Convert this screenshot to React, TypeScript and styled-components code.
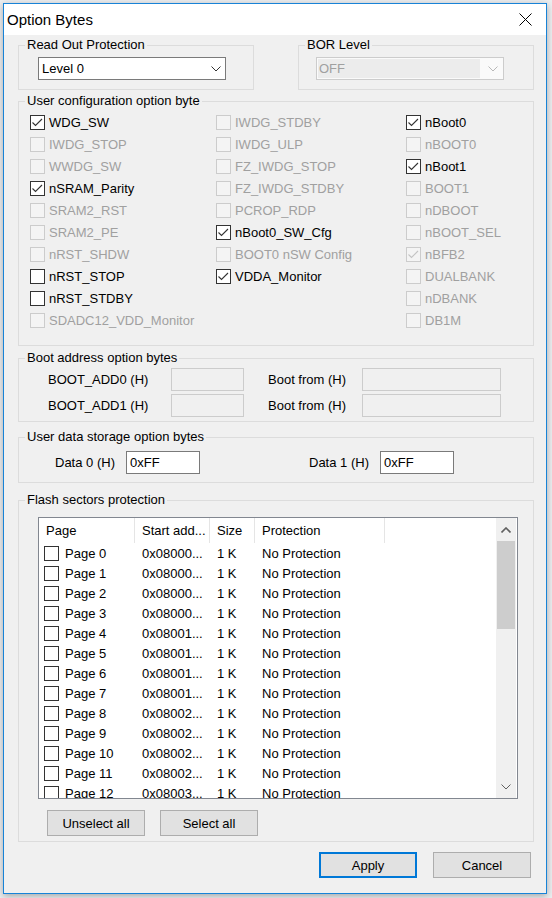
import React from 'react';
import styled, { createGlobalStyle } from 'styled-components';

const GlobalStyle = createGlobalStyle`
  html, body {
    margin: 0;
    padding: 0;
    background: #eceef0;
  }
  body {
    font-family: "Liberation Sans", Arial, sans-serif;
    font-size: 13px;
    color: #000;
  }
  * {
    box-sizing: border-box;
  }
`;

const Page = styled.div`
  width: 552px;
  height: 898px;
  padding: 3px 0 0 3px;
  overflow: hidden;
`;

const Window = styled.div`
  width: 544px;
  height: 891px;
  border: 1px solid #1883d7;
  background: #f0f0f0;
  display: flex;
  flex-direction: column;
  box-shadow: 0 2px 7px rgba(0, 0, 0, 0.3);
`;

const TitleBar = styled.div`
  height: 31px;
  flex: none;
  background: #fff;
  display: flex;
  align-items: center;
  justify-content: space-between;
  padding: 0 14px 0 3px;
  font-size: 15px;
`;

const Body = styled.div`
  padding: 0 12px 0 14px;
  display: flex;
  flex-direction: column;
`;

const TopRow = styled.div`
  display: flex;
  justify-content: space-between;
  margin-top: 10px;
`;

const Group = styled.section<{ $top?: number; $width?: number }>`
  position: relative;
  border: 1px solid #dcdcdc;
  margin-top: ${p => p.$top ?? 0}px;
  width: ${p => (p.$width ? `${p.$width}px` : 'auto')};
`;

const Legend = styled.span`
  position: absolute;
  top: -9px;
  left: 6px;
  padding: 0 2px;
  line-height: 16px;
  background: #f0f0f0;
  white-space: nowrap;
`;

const ComboSlot = styled.div<{ $left: number }>`
  padding: 11px 0 9px ${p => p.$left}px;
`;

const Combo = styled.div<{ $disabled?: boolean }>`
  width: 188px;
  height: 23px;
  border: 1px solid ${p => (p.$disabled ? '#cccccc' : '#7a7a7a')};
  background: ${p => (p.$disabled ? '#fafafa' : '#fff')};
  display: flex;
  align-items: center;
  padding: ${p => (p.$disabled ? '1px 5px 1px 1px' : '0 4px 0 2px')};
  color: ${p => (p.$disabled ? '#a0a0a0' : '#000')};
`;

const ComboText = styled.div<{ $disabled?: boolean }>`
  flex: 1;
  height: 100%;
  display: flex;
  align-items: center;
  padding-left: 1px;
  margin-right: 8px;
  background: ${p => (p.$disabled ? '#ececec' : 'transparent')};
`;

const ConfigGrid = styled.div`
  display: flex;
  padding: 9px 0 14px 11px;
`;

const Column = styled.div<{ $width?: number }>`
  display: flex;
  flex-direction: column;
  width: ${p => (p.$width ? `${p.$width}px` : 'auto')};
`;

const CheckRow = styled.div<{ $disabled?: boolean }>`
  height: 22px;
  display: flex;
  align-items: center;
  gap: 4px;
  color: ${p => (p.$disabled ? '#a0a0a0' : '#000')};
  white-space: nowrap;
`;

const Box = styled.span<{ $disabled?: boolean }>`
  width: 15px;
  height: 15px;
  flex: none;
  border: 1px solid ${p => (p.$disabled ? '#cccccc' : '#333')};
  background: ${p => (p.$disabled ? '#f4f4f4' : '#fff')};
  display: flex;
  align-items: center;
  justify-content: center;
`;

const FieldGrid = styled.div<{ $cols: string; $pad: string }>`
  display: grid;
  grid-template-columns: ${p => p.$cols};
  grid-auto-rows: 23px;
  row-gap: 3px;
  align-items: center;
  padding: ${p => p.$pad};
`;

const FieldLabel = styled.span`
  white-space: nowrap;
`;

const TextBox = styled.div<{ $width: number; $disabled?: boolean }>`
  width: ${p => p.$width}px;
  height: 23px;
  border: 1px solid ${p => (p.$disabled ? '#cccccc' : '#7a7a7a')};
  background: ${p => (p.$disabled ? '#f0f0f0' : '#fff')};
  padding-left: 3px;
  display: flex;
  align-items: center;
`;

const FlashBody = styled.div`
  padding: 16px 15px 5px 19px;
`;

const ListBox = styled.div`
  height: 282px;
  border: 1px solid #828790;
  background: #fff;
  display: flex;
  overflow: hidden;
`;

const TableArea = styled.div`
  flex: 1;
  overflow: hidden;
`;

const TableRow = styled.div<{ $header?: boolean }>`
  display: grid;
  grid-template-columns: 96px 75px 45px 130px;
  height: ${p => (p.$header ? 25 : 20)}px;
  flex: none;
`;

const HeadCell = styled.div`
  border-right: 1px solid #e5e5e5;
  padding-left: 7px;
  display: flex;
  align-items: center;
  white-space: nowrap;
`;

const Cell = styled.div<{ $first?: boolean }>`
  padding-left: ${p => (p.$first ? 5 : 7)}px;
  display: flex;
  align-items: center;
  gap: 6px;
  white-space: nowrap;
`;

const ScrollBar = styled.div`
  width: 20px;
  margin-right: 1px;
  background: #f0f0f0;
  display: flex;
  flex-direction: column;
`;

const ScrollButton = styled.div`
  height: 23px;
  display: flex;
  align-items: center;
  justify-content: center;
`;

const Thumb = styled.div`
  height: 88px;
  margin: 0 1px;
  background: #cdcdcd;
`;

const Spacer = styled.div`
  flex: 1;
`;

const ButtonRow = styled.div<{ $top: number; $end?: boolean }>`
  display: flex;
  gap: ${p => (p.$end ? 16 : 15)}px;
  margin-top: ${p => p.$top}px;
  justify-content: ${p => (p.$end ? 'flex-end' : 'flex-start')};
  padding: ${p => (p.$end ? '0 3px 0 0' : '0 0 0 9px')};
`;

const Button = styled.button<{ $primary?: boolean }>`
  width: 98px;
  height: 26px;
  margin: 0;
  padding: 0;
  font-family: inherit;
  font-size: 13px;
  color: #000;
  background: #e1e1e1;
  border: ${p => (p.$primary ? '2px solid #0078d7' : '1px solid #adadad')};
`;

const Check = ({ color }: { color: string }) => (
  <svg width="13" height="13" viewBox="0 0 13 13">
    <polyline points="1.5,6.5 4.5,9.5 11,3" fill="none" stroke={color} strokeWidth="1.1" />
  </svg>
);

const Chevron = ({ dir, color }: { dir: 'up' | 'down'; color: string }) => (
  <svg width="10" height="6" viewBox="0 0 10 6">
    <polyline
      points={dir === 'down' ? '0.5,0.5 5,5 9.5,0.5' : '0.5,5.5 5,1 9.5,5.5'}
      fill="none"
      stroke={color}
      strokeWidth={dir === 'down' ? 1 : 1.6}
    />
  </svg>
);

type Opt = { label: string; checked?: boolean; disabled?: boolean };

const CheckItem = ({ label, checked, disabled }: Opt) => (
  <CheckRow $disabled={disabled}>
    <Box $disabled={disabled}>{checked && <Check color={disabled ? '#c4c4c4' : '#333'} />}</Box>
    {label}
  </CheckRow>
);

const col1: Opt[] = [
  { label: 'WDG_SW', checked: true },
  { label: 'IWDG_STOP', disabled: true },
  { label: 'WWDG_SW', disabled: true },
  { label: 'nSRAM_Parity', checked: true },
  { label: 'SRAM2_RST', disabled: true },
  { label: 'SRAM2_PE', disabled: true },
  { label: 'nRST_SHDW', disabled: true },
  { label: 'nRST_STOP' },
  { label: 'nRST_STDBY' },
  { label: 'SDADC12_VDD_Monitor', disabled: true },
];

const col2: Opt[] = [
  { label: 'IWDG_STDBY', disabled: true },
  { label: 'IWDG_ULP', disabled: true },
  { label: 'FZ_IWDG_STOP', disabled: true },
  { label: 'FZ_IWDG_STDBY', disabled: true },
  { label: 'PCROP_RDP', disabled: true },
  { label: 'nBoot0_SW_Cfg', checked: true },
  { label: 'BOOT0 nSW Config', disabled: true },
  { label: 'VDDA_Monitor', checked: true },
];

const col3: Opt[] = [
  { label: 'nBoot0', checked: true },
  { label: 'nBOOT0', disabled: true },
  { label: 'nBoot1', checked: true },
  { label: 'BOOT1', disabled: true },
  { label: 'nDBOOT', disabled: true },
  { label: 'nBOOT_SEL', disabled: true },
  { label: 'nBFB2', checked: true, disabled: true },
  { label: 'DUALBANK', disabled: true },
  { label: 'nDBANK', disabled: true },
  { label: 'DB1M', disabled: true },
];

// only the rows that show in the list (the last one is cut by the list edge)
const pages = Array.from({ length: 13 }, (_, i) => i);

export default function App() {
  return (
    <Page>
      <GlobalStyle />
      <Window>
        <TitleBar>
          <span>Option Bytes</span>
          <svg width="13" height="13" viewBox="0 0 13 13">
            <path d="M0.5 0.5 L12.5 12.5 M12.5 0.5 L0.5 12.5" stroke="#000" strokeWidth="1" />
          </svg>
        </TitleBar>
        <Body>
          <TopRow>
            <Group $width={236}>
              <Legend>Read Out Protection</Legend>
              <ComboSlot $left={19}>
                <Combo>
                  <ComboText>Level 0</ComboText>
                  <Chevron dir="down" color="#333" />
                </Combo>
              </ComboSlot>
            </Group>
            <Group $width={236}>
              <Legend>BOR Level</Legend>
              <ComboSlot $left={17}>
                <Combo $disabled>
                  <ComboText $disabled>OFF</ComboText>
                  <Chevron dir="down" color="#b8b8b8" />
                </Combo>
              </ComboSlot>
            </Group>
          </TopRow>

          <Group $top={11}>
            <Legend>User configuration option byte</Legend>
            <ConfigGrid>
              <Column $width={186}>
                {col1.map(o => (
                  <CheckItem key={o.label} {...o} />
                ))}
              </Column>
              <Column $width={190}>
                {col2.map(o => (
                  <CheckItem key={o.label} {...o} />
                ))}
              </Column>
              <Column>
                {col3.map(o => (
                  <CheckItem key={o.label} {...o} />
                ))}
              </Column>
            </ConfigGrid>
          </Group>

          <Group $top={12}>
            <Legend>Boot address option bytes</Legend>
            <FieldGrid $cols="123px 97px 94px 139px" $pad="9px 0 4px 29px">
              <FieldLabel>BOOT_ADD0 (H)</FieldLabel>
              <TextBox $width={73} $disabled />
              <FieldLabel>Boot from (H)</FieldLabel>
              <TextBox $width={139} $disabled />
              <FieldLabel>BOOT_ADD1 (H)</FieldLabel>
              <TextBox $width={73} $disabled />
              <FieldLabel>Boot from (H)</FieldLabel>
              <TextBox $width={139} $disabled />
            </FieldGrid>
          </Group>

          <Group $top={15}>
            <Legend>User data storage option bytes</Legend>
            <FieldGrid $cols="71px 183px 71px 74px" $pad="13px 0 8px 36px">
              <FieldLabel>Data 0 (H)</FieldLabel>
              <TextBox $width={74}>0xFF</TextBox>
              <FieldLabel>Data 1 (H)</FieldLabel>
              <TextBox $width={74}>0xFF</TextBox>
            </FieldGrid>
          </Group>

          <Group $top={17}>
            <Legend>Flash sectors protection</Legend>
            <FlashBody>
              <ListBox>
                <TableArea>
                  <TableRow $header>
                    <HeadCell>Page</HeadCell>
                    <HeadCell>Start add...</HeadCell>
                    <HeadCell>Size</HeadCell>
                    <HeadCell>Protection</HeadCell>
                  </TableRow>
                  {pages.map(n => (
                    <TableRow key={n}>
                      <Cell $first>
                        <Box />
                        Page {n}
                      </Cell>
                      <Cell>{`0x0800${Math.floor(n / 4)}...`}</Cell>
                      <Cell>1 K</Cell>
                      <Cell>No Protection</Cell>
                    </TableRow>
                  ))}
                </TableArea>
                <ScrollBar>
                  <ScrollButton>
                    <Chevron dir="up" color="#606060" />
                  </ScrollButton>
                  <Thumb />
                  <Spacer />
                  <ScrollButton>
                    <Chevron dir="down" color="#606060" />
                  </ScrollButton>
                </ScrollBar>
              </ListBox>
              <ButtonRow $top={11}>
                <Button>Unselect all</Button>
                <Button>Select all</Button>
              </ButtonRow>
            </FlashBody>
          </Group>

          <ButtonRow $top={10} $end>
            <Button $primary>Apply</Button>
            <Button>Cancel</Button>
          </ButtonRow>
        </Body>
      </Window>
    </Page>
  );
}
